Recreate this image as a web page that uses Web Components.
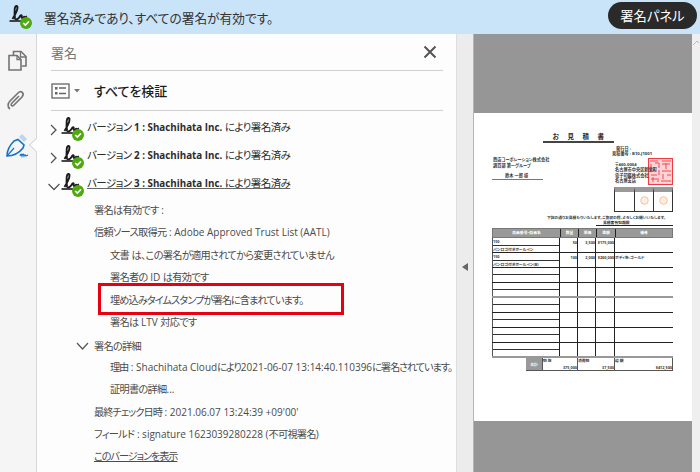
<!DOCTYPE html>
<html lang="ja">
<head>
<meta charset="utf-8">
<style>
  html, body { margin: 0; height: 100%; overflow: hidden; }
  body { font-family: "Open Sans", "Noto Sans CJK JP", sans-serif; font-feature-settings: "palt"; }
</style>
</head>
<body>
<sig-app></sig-app>

<template id="sig-icon-tpl">
  <style>
    :host { display: block; width: 26px; height: 26px; flex: none; }
    svg { display: block; }
  </style>
  <svg width="26" height="26" viewBox="0 0 26 26">
    <path d="M4.500 15 C7 11 9.500 6 9.500 3.500 C9.500 1 7 1.500 6.700 5 C6.500 8 6.500 12 7 14.500 C7.500 16 10 15.500 11.500 13 C12.500 11 14 10.500 13.700 12.500 C13.200 14.500 14.500 14.500 15.500 13.500 C16 12.500 16.500 12 16.500 14 C17 14 17.500 13 19 12.500" fill="none" stroke="#1a1a1a" stroke-width="1.900"/>
    <path d="M1.500 17 H14" stroke="#1a1a1a" stroke-width="1.600"/>
    <circle cx="18" cy="19" r="6" fill="#4ea90f"/>
    <path d="M15.200 19 L17.300 21 L21 17.300" fill="none" stroke="#fff" stroke-width="1.700"/>
  </svg>
</template>

<template id="sig-row-tpl">
  <style>
    :host { display: flex; align-items: flex-start; height: 28px; color: #2c2c2c; font-size: 9.800px; font-weight: 700; }
    .chev { width: 12px; height: 14px; margin: 7px 0 0 -3px; flex: none; }
    .text { margin-left: 1px; padding-top: 3px; white-space: nowrap; line-height: 16px; }
    :host([open]) .text { text-decoration: underline; text-decoration-color: #666; }
    ::slotted(.j) { font-size: 10.500px; font-weight: 400; letter-spacing: -0.600px; }
  </style>
  <svg class="chev" viewBox="0 0 12 14"><path id="c" d="M3 2 L8 7 L3 12" fill="none" stroke="#555" stroke-width="1.300"/></svg>
  <sig-icon></sig-icon>
  <span class="text"><slot></slot></span>
</template>

<template id="sig-line-tpl">
  <style>
    :host { display: block; height: 22.400px; line-height: 21px; font-size: 10px; color: #4b4b4b; white-space: nowrap; }
    :host([lv="1"]) { padding-left: 43px; }
    :host([lv="2"]) { padding-left: 59px; }
    :host([link]) { text-decoration: underline; }
    ::slotted(.j) { font-size: 10.200px; letter-spacing: var(--ls, -0.700px); }
  </style>
  <slot></slot>
</template>

<template id="sig-rail-tpl">
  <style>
    :host { display: block; width: 36px; flex: none; background: #f5f5f5; border-right: 1px solid #d5d5d5; position: relative; }
    svg { display: block; position: absolute; left: 5px; }
    .notch { position: absolute; left: 31px; top: 106px; width: 9px; height: 9px; background: #fff; border-left: 1px solid #d5d5d5; border-bottom: 1px solid #d5d5d5; transform: rotate(45deg); }
  </style>
  <svg style="top:16px" width="24" height="24" viewBox="0 0 24 24">
    <path d="M8.500 5 V1.500 H16 L21 6.500 V16 H17" fill="none" stroke="#747474" stroke-width="1.600"/>
    <path d="M15.500 1.500 V7 H21" fill="none" stroke="#747474" stroke-width="1.300"/>
    <path d="M4 5.500 H12 L16 9.500 V20 H4 Z" fill="#f5f5f5" stroke="#747474" stroke-width="1.600"/>
    <path d="M12 5.500 V9.500 H16" fill="none" stroke="#747474" stroke-width="1.300"/>
  </svg>
  <svg style="top:55px;left:3px" width="24" height="24" viewBox="0 0 24 24">
    <path d="M7 20 C4 18 5 14 7 12 L15 4 C18 1 22 4 19 8 L11 16 C9 18 7 16 9 14 L16 7" fill="none" stroke="#767676" stroke-width="1.700"/>
  </svg>
  <svg style="top:98px" width="28" height="28" viewBox="0 0 28 28">
    <path d="M14 5 L17 2 L22 7 L19 10 Z" fill="#bcd6ee"/>
    <path d="M2 24 C2 19 4 14 9 9 L13 7.500 L19 13 L18 16 C14 21 8 24 2 24 Z" fill="none" stroke="#1473c9" stroke-width="1.600"/>
    <path d="M2 24 L9 16" stroke="#1473c9" stroke-width="1.200"/>
    <path d="M15 24 C16 21 16.500 22 17 24 C18 21 18.500 22 19 24 C20 22 20.500 23 21 24 L23 23" fill="none" stroke="#1473c9" stroke-width="1.200"/>
  </svg>
  <div class="notch"></div>
</template>

<template id="sig-doc-tpl">
  <style>
    :host { display: flex; flex-direction: column; width: 219px; flex: none; background: #969696; padding: 79px 0 51px; box-sizing: border-box; border-left: 1px solid #b5b5b5; }
    .page { flex: 1; background: #fff; position: relative; }
    .title { position: absolute; left: 69px; top: 19px; width: 71px; border-bottom: 2px solid #444; font-size: 6.500px; line-height: 9px; text-align: center; font-weight: 700; letter-spacing: 8.500px; color: #222; text-indent: 8px; }
    .t { position: absolute; font-size: 4.200px; line-height: 5px; font-weight: 700; color: #333; white-space: nowrap; }
    .stamp { position: absolute; left: 174px; top: 45px; }
    .seal { position: absolute; left: 140px; top: 74px; width: 59px; height: 25px; display: grid; grid-template-columns: 20px 19px 1fr; border-bottom: 1px solid #333; box-sizing: border-box; }
    .seal div { border-left: 1px solid #333; border-top: 5px solid #999; position: relative; }
    .seal div:last-child { border-right: 1px solid #333; }
    .seal svg { position: absolute; left: 5px; top: 4px; }
    .grid { position: absolute; left: 18px; top: 115px; width: 181px; }
    .head, .row { display: grid; grid-template-columns: 68px 18px 18px 19px 1fr; box-sizing: border-box; }
    .head { height: 10px; background: #999; border: 1px solid #777; }
    .head span { font-size: 3.800px; line-height: 8px; text-align: center; color: #fff; font-weight: 700; border-right: 1px solid #222; }
    .head span:last-child { border-right: 0; }
    .row { height: 15px; border-bottom: 1px solid #222; }
    .row.grey { border-bottom: 2px solid #999; }
    .cell { border-right: 1px solid #222; font-size: 3.800px; line-height: 10px; font-weight: 700; color: #333; white-space: nowrap; overflow: hidden; text-align: right; }
    .cell:last-child { border-right: 0; text-align: left; }
    .name { display: grid; grid-template-rows: 1fr 1fr; border-left: 1px solid #555; text-align: left; line-height: 7px; }
    .name div:first-child { border-bottom: 1px solid #333; }
    .tot { position: absolute; left: 52px; top: 245px; width: 147px; height: 13px; display: grid; grid-template-columns: 17px 35px 37px 1fr; border-bottom: 1px solid #555; box-sizing: border-box; }
    .tot div { font-size: 3.800px; line-height: 5px; font-weight: 700; color: #333; border-right: 1px solid #555; display: flex; flex-direction: column; justify-content: space-between; }
    .tot div:first-child { background: #999; color: #fff; justify-content: center; text-align: center; }
    .tot span:last-child { text-align: right; }
  </style>
  <div class="page">
    <div class="title">お見積書</div>
    <div class="t" style="left:142px;top:33px">発行日 :</div>
    <div class="t" style="left:138px;top:38px">見積番号 : B10-J1001</div>
    <div class="t" style="left:19px;top:44px">商店コーポレーション株式会社</div>
    <div class="t" style="left:19px;top:50px">調買部 第一グループ</div>
    <div class="t" style="left:18px;top:60px;width:51px;border-bottom:1px solid #777;padding-bottom:1px;text-indent:13px">鈴木 一郎 様</div>
    <svg class="stamp" width="25" height="27" viewBox="0 0 25 27">
      <rect x="0.500" y="0.500" width="24" height="26" fill="#fbd4d6" stroke="#ee3c46"/>
      <path d="M2 3 H10 M14 3 H23 M3 6 V11 M7 5 H11 V10 M14 6 H22 M18 5 V11 M2 13 H8 M11 12 V17 M14 13 H23 M3 17 H9 M15 16 V21 M19 17 H23 M3 21 H11 M5 19 V24 M13 23 H23 M9 23 H11" stroke="#ee4a52" stroke-width="1" fill="none"/>
    </svg>
    <div class="t" style="left:141px;top:49px;line-height:5.400px">〒460-0004<br>名古屋市中央区新栄町<br>電子印鑑株式会社<br>名古屋支店</div>
    <div class="seal"><div></div>
      <div><svg width="9" height="9"><circle cx="4.500" cy="4.500" r="3.800" fill="#fdeee2" stroke="#f2b48a" stroke-width="0.800"/></svg></div>
      <div><svg width="9" height="9"><circle cx="4.500" cy="4.500" r="3.800" fill="#fdeee2" stroke="#f2b48a" stroke-width="0.800"/></svg></div>
    </div>
    <div class="t" style="left:73px;top:102px;font-size:3.800px">下記の通りお見積もりいたします。ご査収の程、よろしくお願いいたします。</div>
    <div class="t" style="left:122px;top:107px;width:77px;border-bottom:1px solid #222;text-indent:7px;font-size:3.800px">見積書有効期限</div>
    <div class="grid" id="grid">
      <div class="head"><span>商品番号・商品名</span><span>数量</span><span>単価</span><span>金額</span><span>備考</span></div>
    </div>
    <div class="tot"><div>合計</div><div><span>税 抜</span><span>375,000</span></div><div><span>消費税</span><span>37,500</span></div><div><span>総 額</span><span>¥412,500</span></div></div>
  </div>
</template>

<template id="sig-app-tpl">
  <style>
    :host { display: flex; flex-direction: column; width: 700px; height: 472px; overflow: hidden; background: #fff; position: relative; }
    .bar { display: flex; align-items: center; height: 34px; flex: none; background: #c9e3f8; padding: 0 3px 0 8px; font-size: 12.700px; color: #333; }
    .bar sig-icon { margin-right: 10px; }
    .bar .msg { flex: 1; white-space: nowrap; }
    .bar button { font: inherit; font-size: 13.300px; background: #2a2a2a; color: #fff; border: 0; border-radius: 13.500px; height: 27px; width: 89px; padding: 0; margin: -3px 0 0 0; font-feature-settings: "palt"; }
    .main { display: flex; flex: 1; min-height: 0; }
    .panel { width: 419px; flex: none; padding: 0 0 0 14px; box-sizing: border-box; overflow: hidden; background: #fdfdfd; }
    .ph { display: flex; justify-content: space-between; align-items: center; height: 37px; margin-right: 13px; padding-right: 6px; border-bottom: 1px solid #d0d0d0; color: #777; font-size: 13px; box-sizing: border-box; }
    .vh { display: flex; align-items: center; height: 40px; margin-right: 13px; border-bottom: 1px solid #d0d0d0; font-size: 13px; font-weight: 500; color: #1c1c1c; margin-bottom: 5px; box-sizing: border-box; }
    .vh svg { margin-right: 13px; }
    .split { width: 17px; flex: none; background: #ececec; display: flex; align-items: center; justify-content: center; border-left: 1px solid #dedede; box-sizing: border-box; }
    .split i { border: 4px solid transparent; border-right: 6px solid #666; border-left: 0; margin-top: 28px; display: block; }
    .sb { width: 8px; flex: none; background: #efefef; padding-top: 6px; box-sizing: border-box; }
    .sb svg { display: block; }
    .group { display: flex; align-items: center; height: 22.400px; font-size: 10.200px; letter-spacing: -0.700px; color: #4b4b4b; padding-left: 25px; }
    .group svg { margin-right: 5px; }
    .box { position: absolute; left: 98px; top: 283px; width: 246px; height: 32px; border: 3px solid #e60012; box-sizing: border-box; }
  </style>
  <div class="bar">
    <sig-icon></sig-icon>
    <span class="msg">署名済みであり、すべての署名が有効です。</span>
    <button>署名パネル</button>
  </div>
  <div class="main">
    <sig-rail></sig-rail>
    <div class="panel">
      <div class="ph"><span>署名</span>
        <svg width="14" height="14" viewBox="0 0 14 14"><path d="M1.500 1.500 L12.500 12.500 M12.500 1.500 L1.500 12.500" stroke="#555" stroke-width="2"/></svg>
      </div>
      <div class="vh">
        <svg width="30" height="16" viewBox="0 0 30 16">
          <rect x="1" y="1" width="17" height="14" fill="none" stroke="#666" stroke-width="1.300"/>
          <rect x="4" y="4" width="2.500" height="2.500" fill="#666"/><rect x="4" y="9" width="2.500" height="2.500" fill="#666"/>
          <path d="M8 5 H15 M8 10.500 H15" stroke="#666" stroke-width="1.300"/>
          <path d="M23 6 H29 L26 9.500 Z" fill="#777"/>
        </svg>
        すべてを検証
      </div>
      <sig-row>バージョン 1 : Shachihata Inc. により署名済み</sig-row>
      <sig-row>バージョン 2 : Shachihata Inc. により署名済み</sig-row>
      <sig-row open>バージョン 3 : Shachihata Inc. により署名済み</sig-row>
      <sig-line lv="1">署名は有効です :</sig-line>
      <sig-line lv="1">信頼ソース取得元 : Adobe Approved Trust List (AATL)</sig-line>
      <sig-line lv="2">文書 は、この署名が適用されてから変更されていません</sig-line>
      <sig-line lv="2">署名者の ID は有効です</sig-line>
      <sig-line lv="2" style="--ls:-0.950px">埋め込みタイムスタンプが署名に含まれています。</sig-line>
      <sig-line lv="2">署名は LTV 対応です</sig-line>
      <div class="group">
        <svg width="13" height="8" viewBox="0 0 13 8"><path d="M1 1 L6.500 7 L12 1" fill="none" stroke="#555" stroke-width="1.200"/></svg>
        署名の詳細
      </div>
      <sig-line lv="2" style="--ls:-1.100px">理由 : Shachihata Cloudにより2021-06-07 13:14:40.110396に署名されています。</sig-line>
      <sig-line lv="2">証明書の詳細...</sig-line>
      <sig-line lv="1" style="--ls:-0.950px">最終チェック日時 : 2021.06.07 13:24:39 +09'00'</sig-line>
      <sig-line lv="1">フィールド : signature 1623039280228 (不可視署名)</sig-line>
      <sig-line lv="1" link style="--ls:-1.100px">このバージョンを表示</sig-line>
    </div>
    <div class="split"><i></i></div>
    <sig-doc></sig-doc>
    <div class="sb"><svg width="8" height="6" viewBox="0 0 8 6"><path d="M1 5 L5 1 L7 3" fill="none" stroke="#bbb" stroke-width="1"/></svg></div>
  </div>
  <div class="box"></div>
</template>

<script>
  function mount(el, id) {
    el.attachShadow({ mode: "open" });
    el.shadowRoot.appendChild(document.getElementById(id).content.cloneNode(true));
  }

  // 和文だけ文字サイズが違うので <span class="j"> で包む
  function wrapCjk(el) {
    const html = el.textContent.replace(/[\u3000-\u9fff\uff00-\uffef]+/g, (m) => `<span class="j">${m}</span>`);
    el.innerHTML = html;
  }

  class SigIcon extends HTMLElement {
    constructor() { super(); mount(this, "sig-icon-tpl"); }
  }
  class SigRow extends HTMLElement {
    constructor() { super(); mount(this, "sig-row-tpl"); }
    connectedCallback() {
      wrapCjk(this);
      if (this.hasAttribute("open")) {
        this.shadowRoot.querySelector("#c").setAttribute("d", "M0.500 5 L6 10.500 L11.500 5");
      }
    }
  }
  class SigLine extends HTMLElement {
    constructor() { super(); mount(this, "sig-line-tpl"); }
    connectedCallback() { wrapCjk(this); }
  }
  class SigRail extends HTMLElement {
    constructor() { super(); mount(this, "sig-rail-tpl"); }
  }
  class SigDoc extends HTMLElement {
    constructor() {
      super();
      mount(this, "sig-doc-tpl");
      const grid = this.shadowRoot.getElementById("grid");
      const data = [
        ["150", "パンロゴ付きボールペン", "50", "3,500", "¥175,000", ""],
        ["150", "パンロゴ付きボールペン(B)", "100", "2,000", "¥200,000", "ボディ色:ゴールド"]
      ];
      for (let i = 0; i < 8; i++) {
        const d = data[i] || ["", "", "", "", "", ""];
        const cls = i === 3 || i === 7 ? "row grey" : "row";
        grid.insertAdjacentHTML("beforeend", `<div class="${cls}">
          <div class="cell name"><div>${d[0]}</div><div>${d[1]}</div></div>
          <div class="cell">${d[2]}</div><div class="cell">${d[3]}</div><div class="cell">${d[4]}</div><div class="cell">${d[5]}</div>
        </div>`);
      }
    }
  }
  class SigApp extends HTMLElement {
    constructor() { super(); mount(this, "sig-app-tpl"); }
  }

  customElements.define("sig-icon", SigIcon);
  customElements.define("sig-row", SigRow);
  customElements.define("sig-line", SigLine);
  customElements.define("sig-rail", SigRail);
  customElements.define("sig-doc", SigDoc);
  customElements.define("sig-app", SigApp);
</script>
</body>
</html>
